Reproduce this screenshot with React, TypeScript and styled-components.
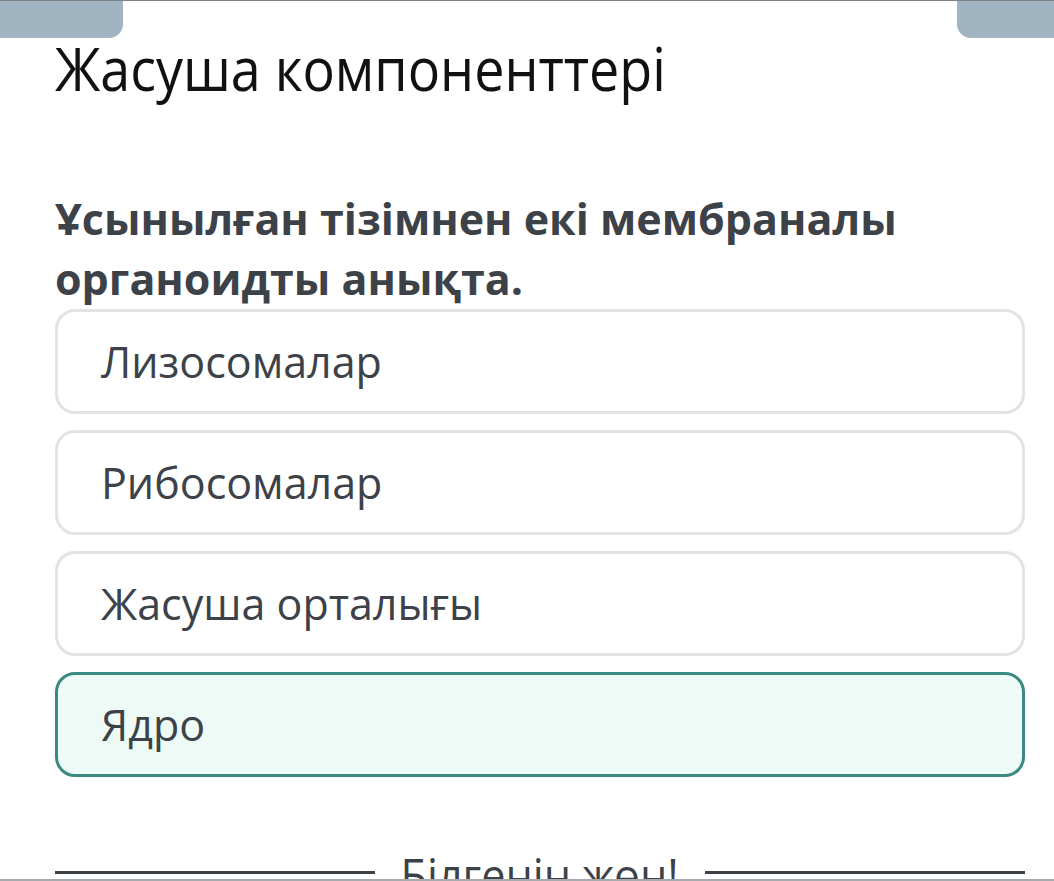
import React from 'react'
import styled, { createGlobalStyle } from 'styled-components'

const GlobalStyle = createGlobalStyle`
  html, body {
    margin: 0;
    padding: 0;
    background: #ffffff;
  }
  body {
    font-family: 'Open Sans', 'Noto Sans', sans-serif;
  }
`

const Page = styled.div`
  width: 1054px;
  height: 881px;
  overflow: hidden;
  position: relative;
  border-top: 1px solid #7c8288;
  box-sizing: border-box;
`

const TabRow = styled.div`
  display: flex;
  justify-content: space-between;
  height: 37px;
`

const Tab = styled.div<{ side: 'left' | 'right'; w: number }>`
  width: ${({ w }) => w}px;
  height: 37px;
  background: #a0b4c1;
  border-radius: ${({ side }) => (side === 'left' ? '0 0 14px 0' : '0 0 0 14px')};
`

const Content = styled.div`
  padding: 0 29px 0 55px;
`

// the heading face in the screenshot is a slightly narrowed sans
const Title = styled.h1`
  margin: -3px 0 0;
  font-size: 60px;
  font-weight: 400;
  line-height: 66px;
  color: #111111;
  transform: scaleX(0.897);
  transform-origin: left center;
  white-space: nowrap;
`

const Question = styled.h2`
  margin: 88px 0 0;
  font-size: 43px;
  font-weight: 700;
  line-height: 60px;
  color: #3d4249;
`

const Options = styled.div`
  display: flex;
  flex-direction: column;
  gap: 16px;
`

const Option = styled.div<{ selected?: boolean }>`
  height: 105px;
  box-sizing: border-box;
  display: flex;
  align-items: center;
  padding-left: 43px;
  border: 3px solid ${({ selected }) => (selected ? '#3b8a81' : '#e2e3e4')};
  background: ${({ selected }) => (selected ? '#eefaf6' : '#ffffff')};
  border-radius: 20px;
  font-size: 43px;
  color: #3d4249;
`

const Divider = styled.div`
  display: flex;
  align-items: flex-start;
  justify-content: space-between;
  margin-top: 70px;
`

const Line = styled.div`
  width: 320px;
  height: 3px;
  background: #3d4249;
  margin-top: 24px;
`

const DividerText = styled.span`
  font-size: 48px;
  line-height: 56px;
  color: #3d4249;
  white-space: nowrap;
  transform: scaleX(0.9);
  transform-origin: center;
`

const BottomEdge = styled.div`
  position: absolute;
  left: 0;
  right: 0;
  bottom: 0;
  height: 2px;
  background: #a8abae;
`

const options = ['Лизосомалар', 'Рибосомалар', 'Жасуша орталығы', 'Ядро']

export default function App() {
  return (
    <Page>
      <GlobalStyle />
      <TabRow>
        <Tab side="left" w={123} />
        <Tab side="right" w={97} />
      </TabRow>
      <Content>
        <Title>Жасуша компоненттері</Title>
        <Question>
          Ұсынылған тізімнен екі мембраналы
          <br />
          органоидты анықта.
        </Question>
        <Options>
          {options.map((o, i) => (
            <Option key={o} selected={i === 3}>
              {o}
            </Option>
          ))}
        </Options>
        <Divider>
          <Line />
          <DividerText>Білгенін жөн!</DividerText>
          <Line />
        </Divider>
      </Content>
      <BottomEdge />
    </Page>
  )
}
